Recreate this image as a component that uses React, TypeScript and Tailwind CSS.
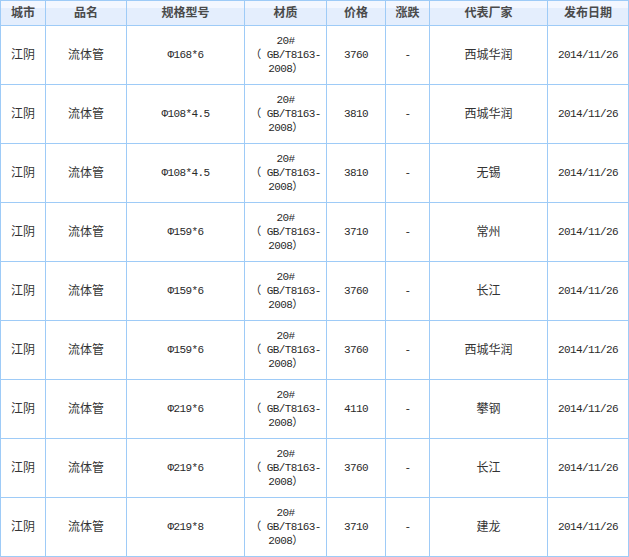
const rows = [
  { spec: "Φ168*6", price: "3760", maker: "西城华润" },
  { spec: "Φ108*4.5", price: "3810", maker: "西城华润" },
  { spec: "Φ108*4.5", price: "3810", maker: "无锡" },
  { spec: "Φ159*6", price: "3710", maker: "常州" },
  { spec: "Φ159*6", price: "3760", maker: "长江" },
  { spec: "Φ159*6", price: "3760", maker: "西城华润" },
  { spec: "Φ219*6", price: "4110", maker: "攀钢" },
  { spec: "Φ219*6", price: "3760", maker: "长江" },
  { spec: "Φ219*8", price: "3710", maker: "建龙" },
];

const heads = ["城市", "品名", "规格型号", "材质", "价格", "涨跌", "代表厂家", "发布日期"];
const widths = [45, 81, 118, 82, 59, 44, 118, 81];

const cell = "border border-[#9ecbf7] text-center align-middle p-0";
const mono = " font-['Liberation_Mono','Noto_Sans_CJK_SC',monospace] text-[11px] tracking-[-0.6px] text-[#2a2a2a]";
const cjk = " text-[12px] text-[#333]";

export default function App() {
  return (
    <div className="w-[629px] h-[557px] bg-white font-['Liberation_Sans','Noto_Sans_CJK_SC',sans-serif]">
      <table className="table-fixed border-collapse w-[629px]">
        <colgroup>
          {widths.map((w, i) => (
            <col key={i} style={{ width: w }} />
          ))}
        </colgroup>
        <thead>
          <tr className="h-[25px] bg-[linear-gradient(#f3f7ff_0,#f3f7ff_7px,#e4eefd_7px)]">
            {heads.map((h) => (
              <th key={h} className={cell + " text-[12px] font-bold text-[#4a4a4a] leading-none"}>
                {h}
              </th>
            ))}
          </tr>
        </thead>
        <tbody>
          {rows.map((r, i) => (
            <tr key={i} className="h-[59px]">
              <td className={cell + cjk}>江阴</td>
              <td className={cell + cjk}>流体管</td>
              <td className={cell + mono}>{r.spec}</td>
              <td className={cell + mono + " leading-[14px]"}>
                20#
                <br />（ GB/T8163-
                <br />
                2008）
              </td>
              <td className={cell + mono}>{r.price}</td>
              <td className={cell + mono}>-</td>
              <td className={cell + cjk}>{r.maker}</td>
              <td className={cell + mono}>2014/11/26</td>
            </tr>
          ))}
        </tbody>
      </table>
    </div>
  );
}
